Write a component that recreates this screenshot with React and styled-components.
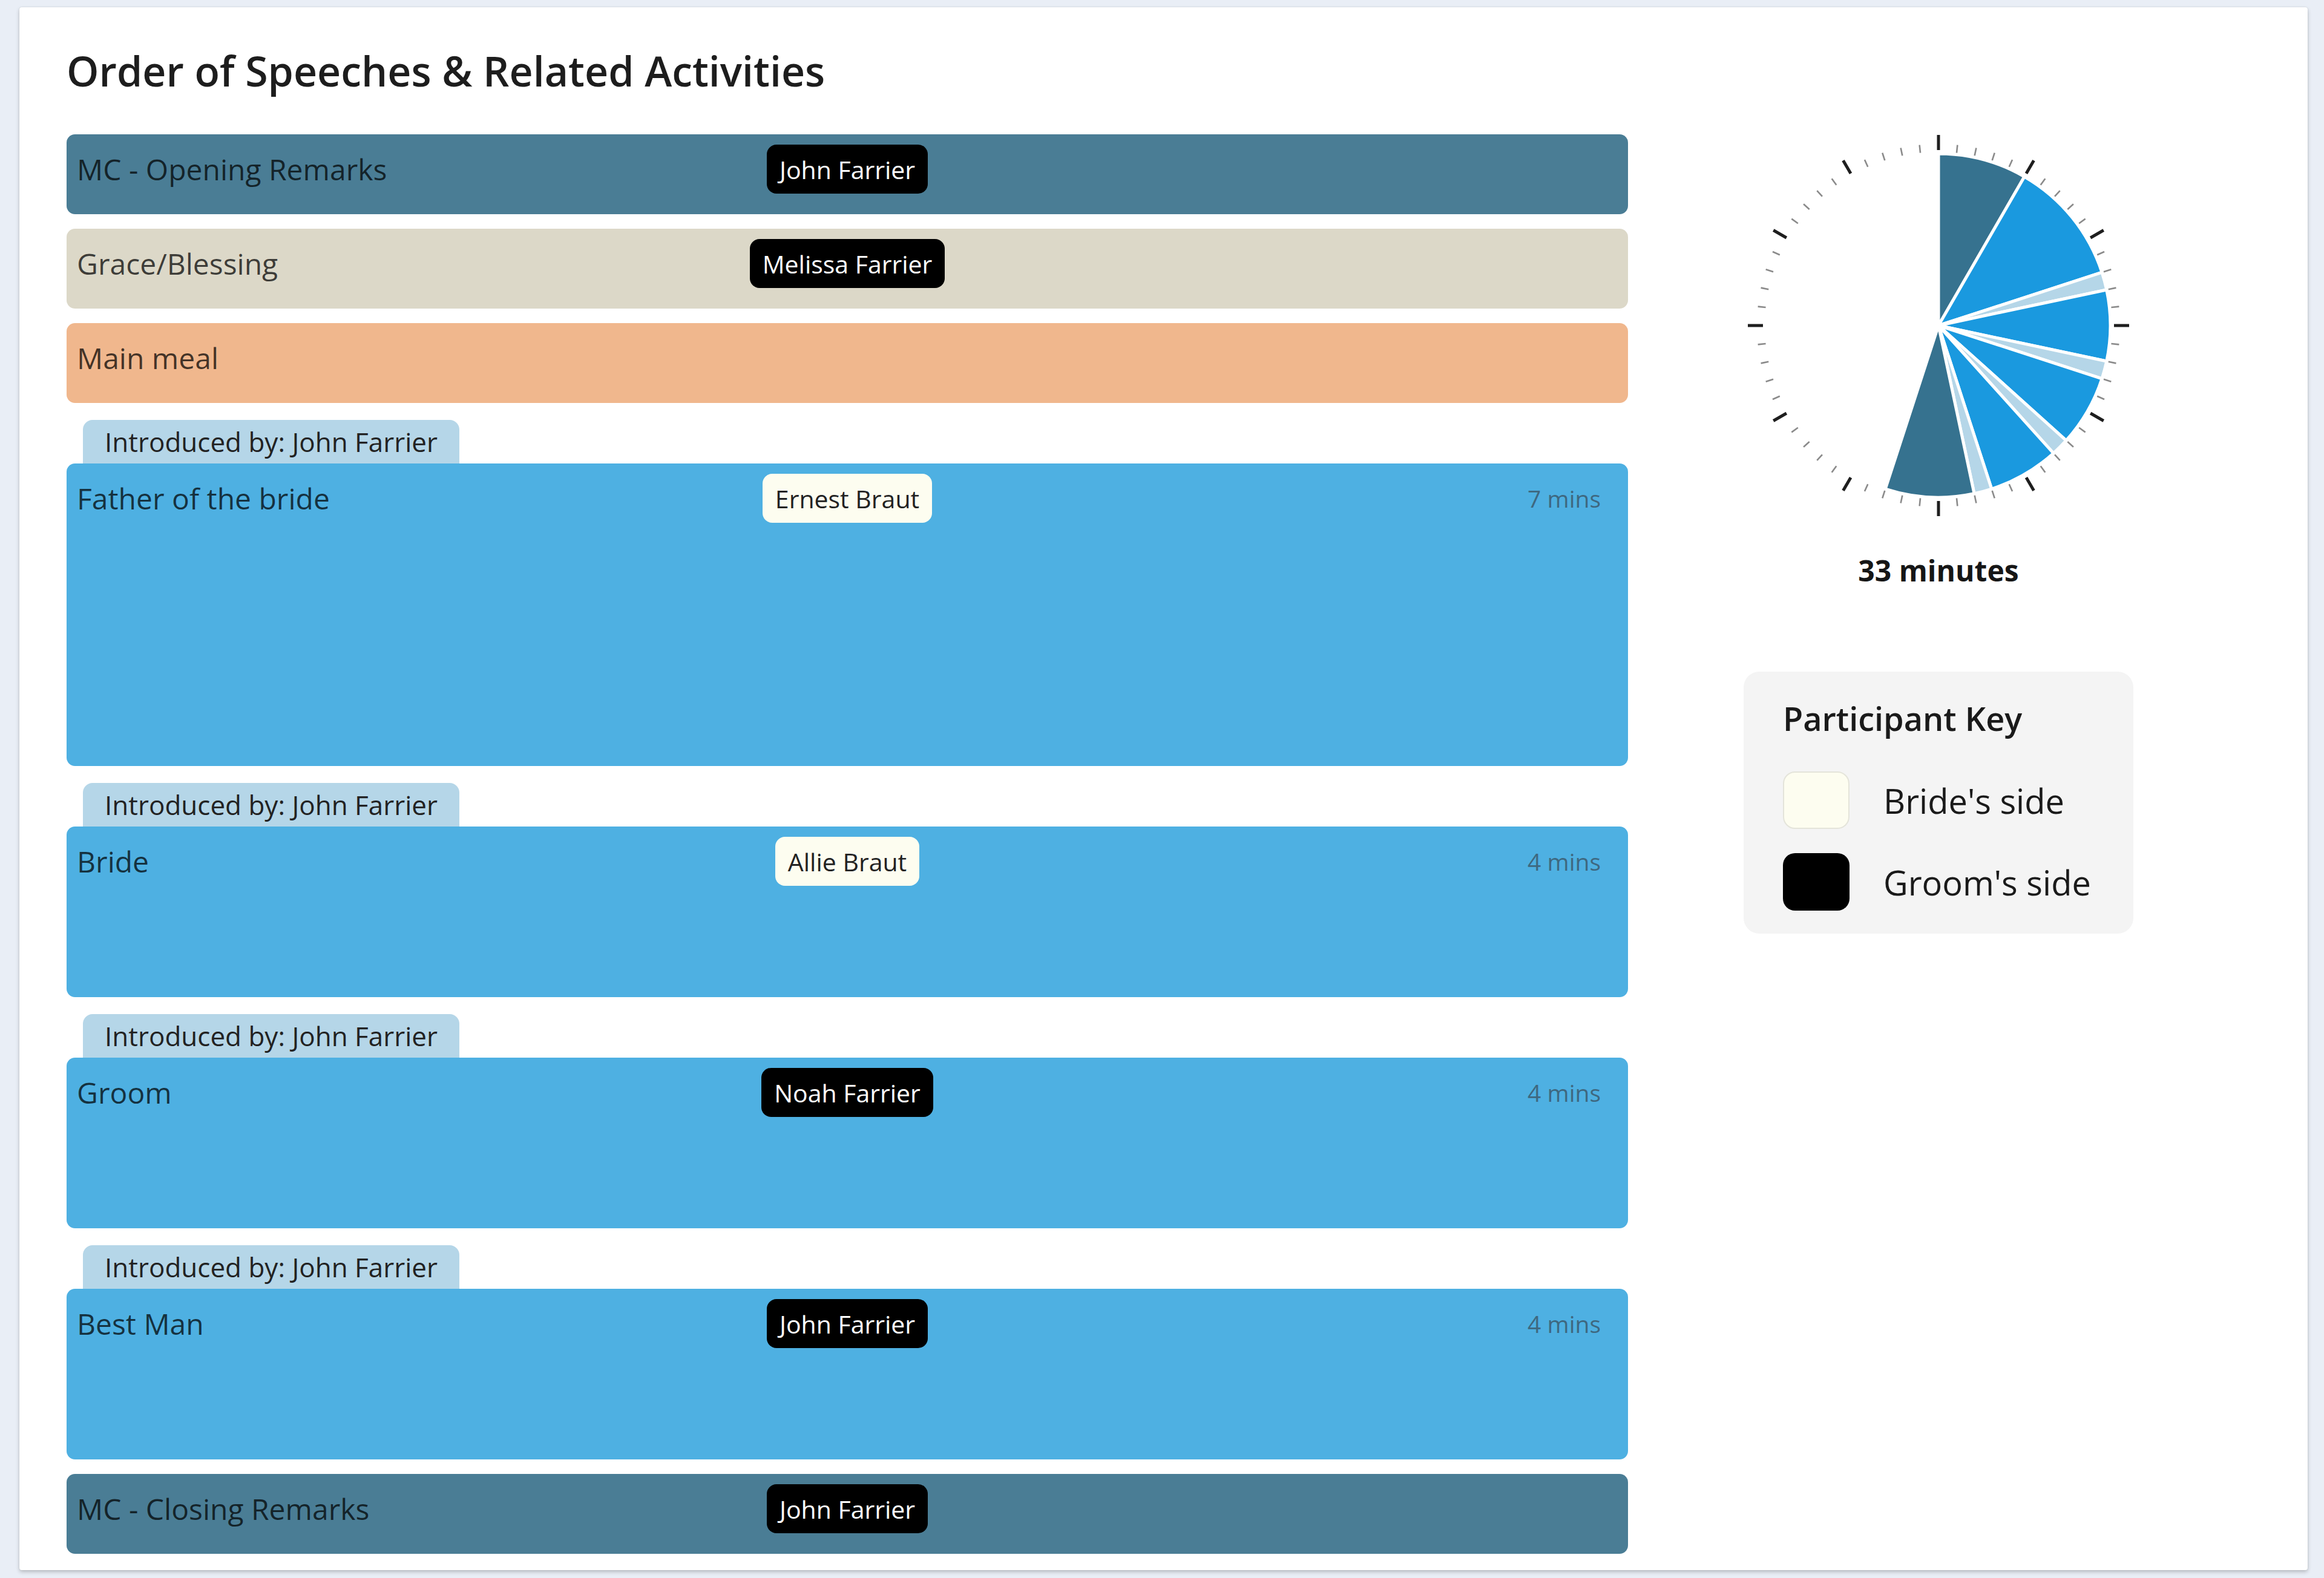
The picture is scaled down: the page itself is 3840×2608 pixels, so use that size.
import React from "react";
import styled, { createGlobalStyle } from "styled-components";

const GlobalStyle = createGlobalStyle`
  html, body { margin: 0; padding: 0; }
  body {
    background: #e9eef6;
    font-family: "Open Sans", "Noto Sans", "Liberation Sans", sans-serif;
    color: #222;
  }
  * { box-sizing: border-box; }
`;

const Card = styled.div`
  margin: 12px 27px 15px 32px;
  background: #fff;
  border-radius: 4px;
  box-shadow: 0 3px 6px rgba(0, 0, 0, 0.22), 0 0 2px rgba(0, 0, 0, 0.12);
  padding: 64px 97px 27px 78px;
`;

const Title = styled.h1`
  margin: 0 0 64px 0;
  font-size: 68px;
  line-height: 82px;
  font-weight: 600;
  color: #1d1d1d;
`;

const Body = styled.div`
  display: grid;
  grid-template-columns: 2580px 1fr;
  align-items: start;
`;

const Schedule = styled.div`
  display: flex;
  flex-direction: column;
  gap: 24px;
`;

const Group = styled.div`
  display: flex;
  flex-direction: column;
  margin-top: 4px;
`;

const Tab = styled.div`
  align-self: flex-start;
  margin-left: 27px;
  height: 72px;
  padding: 0 36px;
  display: flex;
  align-items: center;
  background: #b5d6e8;
  border-radius: 16px 16px 0 0;
  font-size: 44px;
  color: #222;
`;

const Bar = styled.div`
  height: ${(p) => p.$h}px;
  background: ${(p) => p.$bg};
  border-radius: 14px;
  padding: 17px 17px 0 17px;
`;

const Row = styled.div`
  display: grid;
  grid-template-columns: 1fr auto 1fr;
  align-items: center;
  min-height: 81px;
`;

const Label = styled.div`
  font-size: 48px;
  color: rgba(0, 0, 0, 0.72);
  white-space: nowrap;
`;

const Badge = styled.div`
  height: 81px;
  padding: 0 21px;
  display: flex;
  align-items: center;
  border-radius: 16px;
  font-size: 41px;
  white-space: nowrap;
  background: ${(p) => (p.$side === "bride" ? "#fdfdf0" : "#000")};
  color: ${(p) => (p.$side === "bride" ? "#222" : "#fff")};
`;

const Mins = styled.div`
  justify-self: end;
  margin-right: 28px;
  font-size: 39px;
  color: #3e6880;
  white-space: nowrap;
`;

const Side = styled.div`
  display: flex;
  flex-direction: column;
  align-items: center;
  margin-top: -8px;
`;

const ClockSvg = styled.svg`
  display: block;
  width: 648px;
  height: 648px;
`;

const Total = styled.div`
  margin-top: 48px;
  font-size: 48px;
  line-height: 66px;
  font-weight: 700;
  color: #161616;
`;

const Key = styled.div`
  margin-top: 134px;
  width: 644px;
  background: #f4f4f4;
  border-radius: 26px;
  padding: 40px 40px 38px 65px;
`;

const KeyTitle = styled.div`
  font-size: 54px;
  line-height: 74px;
  font-weight: 600;
  color: #1a1a1a;
  margin-bottom: 51px;
`;

const KeyList = styled.div`
  display: flex;
  flex-direction: column;
  gap: 40px;
`;

const KeyRow = styled.div`
  display: flex;
  align-items: center;
  gap: 56px;
`;

const Swatch = styled.div`
  width: 110px;
  height: 95px;
  border-radius: 20px;
  background: ${(p) => p.$color};
  border: ${(p) => (p.$light ? "2px solid #e4e4da" : "none")};
`;

const KeyLabel = styled.div`
  font-size: 56px;
  color: #1a1a1a;
`;

const items = [
  { type: "bar", label: "MC - Opening Remarks", bg: "#4a7d95", who: "John Farrier", side: "groom" },
  { type: "bar", label: "Grace/Blessing", bg: "#dcd8c8", who: "Melissa Farrier", side: "groom" },
  { type: "bar", label: "Main meal", bg: "#f0b78d" },
  { type: "speech", label: "Father of the bride", who: "Ernest Braut", side: "bride", mins: 7, intro: "John Farrier" },
  { type: "speech", label: "Bride", who: "Allie Braut", side: "bride", mins: 4, intro: "John Farrier" },
  { type: "speech", label: "Groom", who: "Noah Farrier", side: "groom", mins: 4, intro: "John Farrier" },
  { type: "speech", label: "Best Man", who: "John Farrier", side: "groom", mins: 4, intro: "John Farrier" },
  { type: "bar", label: "MC - Closing Remarks", bg: "#4a7d95", who: "John Farrier", side: "groom" },
];

const slices = [
  { m: 5, c: "#36728f" },
  { m: 7, c: "#1a99df" },
  { m: 1, c: "#b5d6e8" },
  { m: 4, c: "#1a99df" },
  { m: 1, c: "#b5d6e8" },
  { m: 4, c: "#1a99df" },
  { m: 1, c: "#b5d6e8" },
  { m: 4, c: "#1a99df" },
  { m: 1, c: "#b5d6e8" },
  { m: 5, c: "#36728f" },
];

const C = 324;
const R = 284;

function pt(min, r) {
  const a = (min / 60) * Math.PI * 2;
  return [C + r * Math.sin(a), C - r * Math.cos(a)];
}

function Clock() {
  let start = 0;
  const paths = slices.map((s, i) => {
    const a0 = start;
    const a1 = start + s.m;
    start = a1;
    const [x0, y0] = pt(a0, R);
    const [x1, y1] = pt(a1, R);
    const large = s.m > 30 ? 1 : 0;
    const d = `M ${C} ${C} L ${x0} ${y0} A ${R} ${R} 0 ${large} 1 ${x1} ${y1} Z`;
    return <path key={i} d={d} fill={s.c} stroke="#fff" strokeWidth="5" strokeLinejoin="round" />;
  });
  const ticks = [];
  for (let i = 0; i < 60; i++) {
    const major = i % 5 === 0;
    const [xa, ya] = pt(i, major ? 290 : 287);
    const [xb, yb] = pt(i, major ? 315 : 300);
    ticks.push(
      <line
        key={i}
        x1={xa}
        y1={ya}
        x2={xb}
        y2={yb}
        stroke={major ? "#1e1e1e" : "#8a8a8a"}
        strokeWidth={major ? 5 : 2.6}
      />
    );
  }
  return (
    <ClockSvg viewBox="0 0 648 648">
      {ticks}
      {paths}
    </ClockSvg>
  );
}

function ItemRow({ item }) {
  return (
    <Row>
      <Label>{item.label}</Label>
      {item.who ? <Badge $side={item.side}>{item.who}</Badge> : <span />}
      {item.mins ? <Mins>{item.mins} mins</Mins> : <span />}
    </Row>
  );
}

export default function App() {
  return (
    <>
      <GlobalStyle />
      <Card>
        <Title>Order of Speeches &amp; Related Activities</Title>
        <Body>
          <Schedule>
            {items.map((item, i) =>
              item.type === "speech" ? (
                <Group key={i}>
                  <Tab>Introduced by: {item.intro}</Tab>
                  <Bar $bg="#4eb0e2" $h={item.mins === 7 ? 500 : 282}>
                    <ItemRow item={item} />
                  </Bar>
                </Group>
              ) : (
                <Bar key={i} $bg={item.bg} $h={132}>
                  <ItemRow item={item} />
                </Bar>
              )
            )}
          </Schedule>
          <Side>
            <Clock />
            <Total>33 minutes</Total>
            <Key>
              <KeyTitle>Participant Key</KeyTitle>
              <KeyList>
                <KeyRow>
                  <Swatch $color="#fdfdf0" $light />
                  <KeyLabel>Bride's side</KeyLabel>
                </KeyRow>
                <KeyRow>
                  <Swatch $color="#000" />
                  <KeyLabel>Groom's side</KeyLabel>
                </KeyRow>
              </KeyList>
            </Key>
          </Side>
        </Body>
      </Card>
    </>
  );
}
